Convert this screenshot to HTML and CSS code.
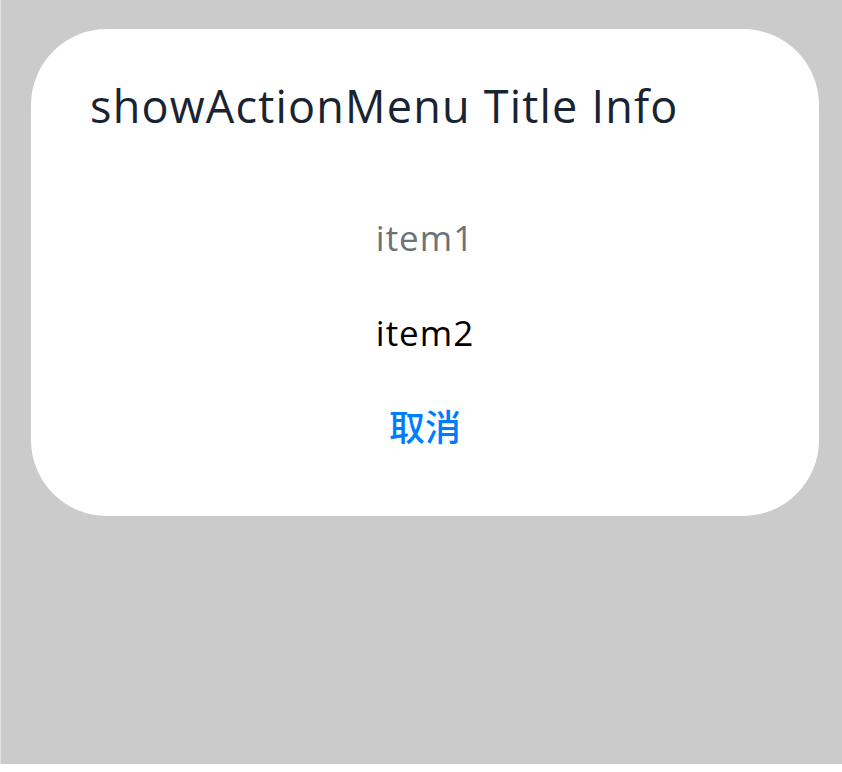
FILE: index.html
```html
<!DOCTYPE html>
<html lang="zh">
<head>
<meta charset="utf-8">
<link rel="stylesheet" href="styles.css">
</head>
<body>
<div class="screen">
  <div class="dialog">
    <div class="title">showActionMenu Title Info</div>
    <div class="menu">
      <div class="item item-disabled">item1</div>
      <div class="item">item2</div>
      <div class="item item-cancel">取消</div>
    </div>
  </div>
</div>
</body>
</html>
```

FILE: styles.css
```css
html, body {
  margin: 0;
  padding: 0;
  background: #ffffff;
}
.screen {
  height: 764px;
  background: #cbcbcb;
  border-left: 1px solid #e2e2e2;
  box-sizing: border-box;
  padding-top: 29px;
  padding-left: 30px;
  font-family: "Open Sans", "Noto Sans CJK SC", sans-serif;
  font-variant-ligatures: none;
}
.dialog {
  width: 788px;
  height: 487px;
  background: #ffffff;
  border-radius: 76px;
  box-sizing: border-box;
  padding: 0 30px 0 59px;
}
.title {
  font-size: 45px;
  font-weight: 500;
  letter-spacing: 1.2px;
  line-height: 60px;
  color: #182431;
  padding-top: 47px;
  white-space: nowrap;
}
.menu {
  display: flex;
  flex-direction: column;
  align-items: center;
  margin-left: -29px;
  margin-top: 78px;
  gap: 47px;
}
.item {
  font-size: 35px;
  font-weight: 500;
  letter-spacing: 1px;
  line-height: 48px;
  color: #000000;
}
.item-disabled {
  color: #6e7276;
}
.item-cancel {
  font-size: 36px;
  letter-spacing: 0;
  color: #007dff;
}
```
